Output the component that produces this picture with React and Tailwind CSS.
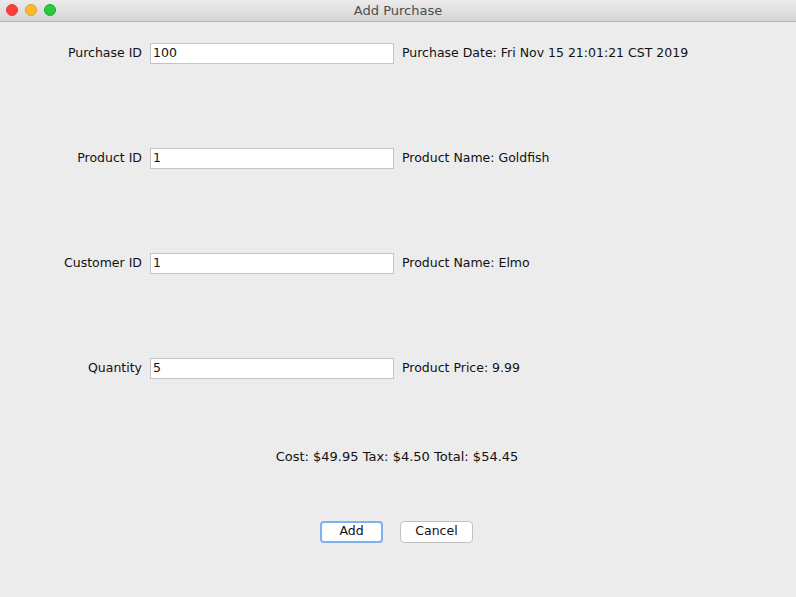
import React from 'react';

const font = { fontFamily: '"DejaVu Sans", "Liberation Sans", sans-serif' };

const rows = [
  { label: 'Purchase ID', value: '100', info: 'Purchase Date: Fri Nov 15 21:01:21 CST 2019' },
  { label: 'Product ID', value: '1', info: 'Product Name: Goldfish' },
  { label: 'Customer ID', value: '1', info: 'Product Name: Elmo' },
  { label: 'Quantity', value: '5', info: 'Product Price: 9.99' },
];

const FormRow = ({ row }) => (
  <div className="flex items-center h-[21px]">
    <div className="w-[142px] text-right">{row.label}</div>
    <div className="ml-2 w-[244px] h-[21px] bg-white border border-[#c4c4c4] flex items-center px-[2px]">
      {row.value}
    </div>
    <div className="ml-2">{row.info}</div>
  </div>
);

export default function App() {
  return (
    <div className="w-[796px] h-[597px] bg-[#ececec] text-[12.5px] text-[#111] flex flex-col overflow-hidden" style={font}>
      {/* title bar */}
      <div className="h-[22px] shrink-0 bg-gradient-to-b from-[#ebebeb] to-[#d6d6d6] border-b border-[#b4b4b4] relative flex items-center justify-center">
        <div className="absolute left-[6px] top-[4px] flex gap-[7px]">
          <span className="w-3 h-3 rounded-full bg-[#fc3d3b] border border-[#e0443e]" />
          <span className="w-3 h-3 rounded-full bg-[#fdbb2e] border border-[#dea123]" />
          <span className="w-3 h-3 rounded-full bg-[#29c940] border border-[#1aab29]" />
        </div>
        <span className="text-[13px] text-[#4d4d4d]">Add Purchase</span>
      </div>

      <div className="flex flex-col gap-[84px] pt-[21px]">
        {rows.map((r) => (
          <FormRow key={r.label} row={r} />
        ))}
      </div>

      <div className="mt-[68px] text-center text-[13px] pr-[2px]">Cost: $49.95 Tax: $4.50 Total: $54.45</div>

      <div className="mt-[54px] flex justify-center gap-[17px] pr-[3px]">
        <button className="w-[63px] h-[22px] bg-white rounded-[4px] border-2 border-[#7fb2f0] text-[12.5px] leading-none">
          Add
        </button>
        <button className="w-[73px] h-[22px] bg-white rounded-[4px] border border-[#c0c0c0] text-[12.5px] leading-none">
          Cancel
        </button>
      </div>
    </div>
  );
}
